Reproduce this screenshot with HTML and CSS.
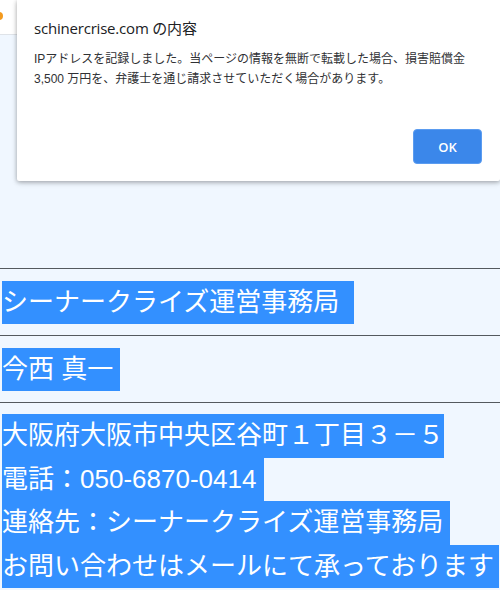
FILE: index.html
```html
<!DOCTYPE html>
<html lang="ja">
<head>
<meta charset="utf-8">
<title>schinercrise.com</title>
<link rel="stylesheet" href="styles.css">
</head>
<body>
<header class="topbar"><span class="dot"></span></header>
<main class="content">
  <hr class="rule">
  <section class="block"><span class="sel">シーナークライズ運営事務局  </span></section>
  <hr class="rule">
  <section class="block"><span class="sel">今西 真一 </span></section>
  <hr class="rule">
  <section class="block address">
    <div class="line"><span class="sel">大阪府大阪市中央区谷町１丁目３－５</span></div>
    <div class="line"><span class="sel">電話：050-6870-0414 </span></div>
    <div class="line"><span class="sel">連絡先：シーナークライズ運営事務局 </span></div>
    <div class="line"><span class="sel">お問い合わせはメールにて承っております</span></div>
  </section>
</main>
<div class="dialog" role="alertdialog">
  <div class="dialog-title">schinercrise.com の内容</div>
  <div class="dialog-msg">IPアドレスを記録しました。当ページの情報を無断で転載した場合、損害賠償金<br>3,500 万円を、弁護士を通じ請求させていただく場合があります。</div>
  <div class="dialog-actions"><button class="ok">OK</button></div>
</div>
</body>
</html>
```
FILE: styles.css
```css
html, body {
  margin: 0;
  padding: 0;
}
body {
  background: #f0f7ff;
  font-family: "Liberation Sans", "Noto Sans CJK JP", sans-serif;
  width: 500px;
  height: 590px;
  overflow: hidden;
}
.topbar {
  height: 35px;
  background: #ffffff;
  border-bottom: 1px solid #dfe3e8;
  display: flex;
  align-items: center;
  padding-top: 1px;
  padding-bottom: 4px;
  box-sizing: border-box;
}
.dot {
  width: 8px;
  height: 8px;
  border-radius: 50%;
  background: #f39a1e;
  margin-left: -5px;
}
.content {
  padding: 233px 2px 0 2px;
}
.rule {
  margin: 0 -2px;
  border: 0;
  height: 1px;
  background: #54595e;
}
.block {
  padding: 12px 0 11px 0;
  font-size: 26px;
  color: #ffffff;
}
.sel {
  display: inline-block;
  background: #3390ff;
  color: #ffffff;
  line-height: 43px;
  white-space: pre;
}
.address {
  padding: 11px 0 0 0;
}
.address .line {
  height: 43.5px;
}
.address .sel {
  line-height: 43.5px;
}
.address .line:last-child .sel {
  padding-right: 5px;
}
.dialog {
  position: absolute;
  top: 0;
  left: 17px;
  width: 483px;
  height: 181px;
  box-sizing: border-box;
  background: #ffffff;
  border-radius: 0 0 2px 2px;
  box-shadow: 0 1px 4px rgba(0, 0, 0, 0.28), 0 2px 6px rgba(0, 0, 0, 0.12);
  padding: 18px 18px 17px 17px;
  display: flex;
  flex-direction: column;
  font-family: "Open Sans", "Noto Sans CJK JP", sans-serif;
  color: #202124;
}
.dialog-title {
  font-size: 15px;
  line-height: 20px;
  letter-spacing: -0.2px;
}
.dialog-msg {
  margin-top: 11px;
  font-size: 12px;
  line-height: 20px;
  color: #303134;
  font-family: "Liberation Sans", "Noto Sans CJK JP", sans-serif;
}
.dialog-actions {
  margin-top: auto;
  display: flex;
  justify-content: flex-end;
}
.ok {
  width: 69px;
  height: 35px;
  border: 1px solid #5b9cf0;
  border-radius: 4px;
  background: #3b87ea;
  color: #ffffff;
  font-family: "Open Sans", sans-serif;
  font-weight: 600;
  font-size: 13px;
  padding: 0;
}
```
